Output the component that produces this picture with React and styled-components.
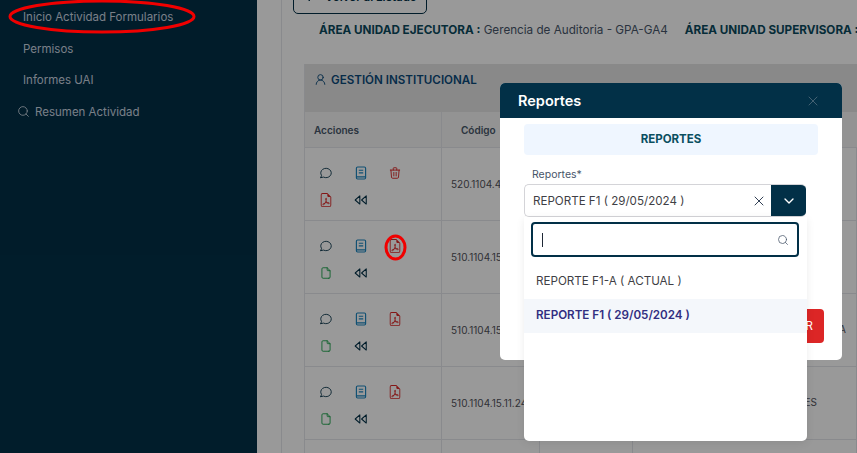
import React from "react";
import styled, { createGlobalStyle } from "styled-components";
import { Search, X, ChevronDown, UserRound } from "lucide-react";
import { BsFileEarmarkPdf } from "react-icons/bs";
import {
  TbMessageCircle,
  TbTrash,
  TbFile,
  TbPlayerTrackPrev,
  TbArrowLeft,
} from "react-icons/tb";

const GlobalStyle = createGlobalStyle`
  html, body { margin: 0; padding: 0; height: 100%; overflow: hidden; }
  body { font-family: Inter, "Liberation Sans", sans-serif; background: #fff; }
`;

const rows = [
  { code: "520.1104.4", icons: ["trash", "pdf"] },
  { code: "510.1104.15", icons: ["pdf", "file"] },
  { code: "510.1104.15", icons: ["pdf", "file"], tail: "A", tailRight: 10 },
  { code: "510.1104.15.11.24", icons: ["pdf", "file"], tail: "ES", tailRight: 39 },
];

function BookIcon() {
  return (
    <svg width="14" height="14" viewBox="0 0 14 14" fill="none" stroke="currentColor" strokeWidth="1.15">
      <rect x="2.4" y="1" width="9.2" height="12" rx="1.2" />
      <path d="M2.4 10.8h9.2M4.8 4.2h4.4M4.8 6.9h4.4" />
    </svg>
  );
}

function App() {
  return (
    <Page>
      <GlobalStyle />
      <Sidebar>
        <NavItem>Inicio Actividad Formularios</NavItem>
        <NavItem>Permisos</NavItem>
        <NavItem>Informes UAI</NavItem>
        <NavItem $icon>
          <Search size={13} strokeWidth={1.6} />
          Resumen Actividad
        </NavItem>
      </Sidebar>
      <Main>
        <BackButton>
          <TbArrowLeft size={14} />
          Volver al Listado
        </BackButton>
        <AreaLine>
          <span>
            <b>ÁREA UNIDAD EJECUTORA :</b> Gerencia de Auditoria - GPA-GA4
          </span>
          <span>
            <b>ÁREA UNIDAD SUPERVISORA :</b>
          </span>
        </AreaLine>
        <Card>
          <CardTitle>
            <UserRound size={13} strokeWidth={1.7} />
            GESTIÓN INSTITUCIONAL
          </CardTitle>
          <HeadRow>
            <HeadCell>Acciones</HeadCell>
            <HeadCell $center>Código</HeadCell>
          </HeadRow>
          {rows.map((row, i) => (
            <Row key={i}>
              <ActionCell>
                <IconGrid>
                  <Dark><TbMessageCircle size={14} strokeWidth={1.5} /></Dark>
                  <Blue><BookIcon /></Blue>
                  {row.icons[0] === "trash" ? (
                    <Red><TbTrash size={14} strokeWidth={1.6} /></Red>
                  ) : (
                    <Red><BsFileEarmarkPdf size={14} /></Red>
                  )}
                  {row.icons[1] === "pdf" ? (
                    <Red><BsFileEarmarkPdf size={14} /></Red>
                  ) : (
                    <Green><TbFile size={14} strokeWidth={1.6} /></Green>
                  )}
                  <Dark><TbPlayerTrackPrev size={14} strokeWidth={1.8} /></Dark>
                </IconGrid>
              </ActionCell>
              <CodeCell>{row.code}</CodeCell>
              <Cell />
              <Cell>
                {row.tail && <Tail $right={row.tailRight}>{row.tail}</Tail>}
              </Cell>
            </Row>
          ))}
          <Row>
            <Cell />
            <Cell />
            <Cell />
            <Cell />
          </Row>
        </Card>
      </Main>
      <Overlay />
      <Modal>
        <ModalHeader>
          Reportes
          <X size={16} strokeWidth={1.3} color="#4f6a7a" />
        </ModalHeader>
        <ModalBody>
          <Banner>REPORTES</Banner>
          <FieldLabel>Reportes*</FieldLabel>
          <SelectBox>
            <SelectValue>REPORTE F1 ( 29/05/2024 )</SelectValue>
            <ClearIcon><X size={16} strokeWidth={1.5} /></ClearIcon>
            <Arrow><ChevronDown size={16} strokeWidth={2} /></Arrow>
          </SelectBox>
          <FooterRow>
            <RedButton>GENERAR</RedButton>
          </FooterRow>
        </ModalBody>
      </Modal>
      <Dropdown>
        <SearchWrap>
          <SearchBox>
            <Caret />
            <Search size={12} strokeWidth={1.5} color="#475569" />
          </SearchBox>
        </SearchWrap>
        <Option>REPORTE F1-A ( ACTUAL )</Option>
        <Option $selected>REPORTE F1 ( 29/05/2024 )</Option>
      </Dropdown>
      <MarkNav viewBox="0 0 190 36" fill="none">
        <ellipse cx="95" cy="16.5" rx="92" ry="15.5" stroke="#f00000" strokeWidth="3" />
      </MarkNav>
      <MarkIcon viewBox="0 0 24 28" fill="none">
        <ellipse cx="11.5" cy="13.5" rx="9.5" ry="11.5" stroke="#f00000" strokeWidth="3" />
      </MarkIcon>
    </Page>
  );
}

export default App;

const Page = styled.div`
  display: flex;
  width: 857px;
  height: 453px;
  overflow: hidden;
  position: relative;
`;

const Sidebar = styled.nav`
  width: 257px;
  flex: none;
  background: #023047;
  padding-top: 1.4px;
  box-sizing: border-box;
`;

const NavItem = styled.div`
  display: flex;
  align-items: center;
  gap: 5px;
  height: 31.5px;
  padding-left: ${(p) => (p.$icon ? "17px" : "23px")};
  font-size: 11.5px;
  color: #cbd5e1;
`;

const Main = styled.main`
  flex: 1;
  min-width: 0;
  margin-left: 24px;
  border-left: 1px solid #e5e7eb;
  padding-left: 11px;
  overflow: hidden;
`;

const BackButton = styled.div`
  display: flex;
  align-items: center;
  gap: 8px;
  width: 134px;
  height: 34px;
  margin-top: -20px;
  padding-left: 9px;
  box-sizing: border-box;
  border: 1px solid #023047;
  border-radius: 5px;
  font-size: 11.5px;
  font-weight: 600;
  color: #023047;
`;

const AreaLine = styled.div`
  display: flex;
  gap: 17px;
  margin: 8px 0 0 26px;
  font-size: 11.7px;
  line-height: 16px;
  white-space: nowrap;
  color: #475569;

  b {
    font-weight: 700;
    color: #0b4a5e;
  }
`;

const Card = styled.section`
  margin: 26px 0 0 11px;
  border-left: 1px solid #e5e7eb;
`;

const CardTitle = styled.div`
  display: flex;
  align-items: flex-start;
  gap: 4px;
  height: 48px;
  padding: 9px 0 0 9px;
  box-sizing: border-box;
  background: #e5e5e5;
  font-size: 11.6px;
  font-weight: 600;
  line-height: 14px;
  color: #0b4a7a;
`;

const columns = "137px 98px 93px 1fr";

const HeadRow = styled.div`
  display: grid;
  grid-template-columns: ${columns};
  height: 36px;
  background: #f5f5f5;
  border-bottom: 1px solid #e5e7eb;
  box-sizing: border-box;
`;

const HeadCell = styled.div`
  display: flex;
  align-items: center;
  padding-left: ${(p) => (p.$center ? "19px" : "9px")};
  border-right: ${(p) => (p.$center ? "none" : "1px solid #e5e7eb")};
  font-size: 10px;
  font-weight: 600;
  color: #475569;
`;

const Row = styled.div`
  display: grid;
  grid-template-columns: ${columns};
  height: 73px;
  box-sizing: border-box;
  border-bottom: 1px solid #e5e7eb;
`;

const Cell = styled.div`
  position: relative;
  border-right: 1px solid #e5e7eb;
`;

const ActionCell = styled(Cell)`
  padding: 18px 0 0 14px;
`;

const IconGrid = styled.div`
  display: grid;
  grid-template-columns: 35px 34px 35px;
  grid-auto-rows: 27px;
  font-size: 0;
`;

const Dark = styled.span`color: #023047;`;
const Blue = styled.span`color: #1a86c0;`;
const Red = styled.span`color: #dc2626;`;
const Green = styled.span`color: #22a650;`;

const CodeCell = styled(Cell)`
  display: flex;
  align-items: center;
  padding-left: 9px;
  font-size: 10px;
  color: #52525b;
  white-space: nowrap;
`;

const Tail = styled.span`
  position: absolute;
  top: 29px;
  right: ${(p) => p.$right}px;
  font-size: 10px;
  color: #52525b;
`;

const Overlay = styled.div`
  position: absolute;
  inset: 0;
  background: rgba(0, 0, 0, 0.4);
`;

const Modal = styled.div`
  position: absolute;
  left: 500px;
  top: 83px;
  width: 342px;
  height: 277px;
  background: #fff;
  border-radius: 5px;
  overflow: hidden;
`;

const ModalHeader = styled.header`
  display: flex;
  align-items: center;
  justify-content: space-between;
  height: 35px;
  padding: 0 21px 0 18px;
  background: #023047;
  color: #fff;
  font-size: 14.5px;
  font-weight: 600;
`;

const ModalBody = styled.div`
  padding: 6px 24px 0;
`;

const Banner = styled.div`
  display: flex;
  align-items: center;
  justify-content: center;
  height: 31px;
  padding-bottom: 1px;
  box-sizing: border-box;
  border-radius: 4px;
  background: #eff6ff;
  font-size: 11.5px;
  font-weight: 700;
  color: #0b4f5f;
`;

const FieldLabel = styled.div`
  margin: 13px 0 0 8px;
  font-size: 10.5px;
  line-height: 14px;
  color: #475569;
`;

const SelectBox = styled.div`
  display: flex;
  align-items: center;
  width: 282px;
  height: 33px;
  margin-top: 2px;
  box-sizing: border-box;
  border: 1px solid #d4d4d8;
  border-right: none;
  border-radius: 5px;
  overflow: hidden;
`;

const SelectValue = styled.div`
  flex: 1;
  padding-left: 8px;
  font-size: 11.6px;
  color: #3f3f46;
`;

const ClearIcon = styled.span`
  display: flex;
  margin-right: 4px;
  color: #334155;
`;

const Arrow = styled.span`
  display: flex;
  align-items: center;
  justify-content: center;
  width: 35px;
  height: 33px;
  background: #023047;
  color: #fff;
`;

const FooterRow = styled.div`
  display: flex;
  justify-content: flex-end;
  margin: 92px -6px 0 0;
`;

const RedButton = styled.div`
  display: flex;
  align-items: center;
  justify-content: center;
  width: 70px;
  height: 34px;
  padding-right: 6px;
  box-sizing: border-box;
  border-radius: 4px;
  background: #dc2626;
  color: #fff;
  font-size: 11.5px;
`;

const Dropdown = styled.div`
  position: absolute;
  left: 524px;
  top: 217px;
  width: 283px;
  height: 224px;
  background: #fff;
  border-radius: 0 0 5px 5px;
  box-shadow: 0 2px 8px rgba(0, 0, 0, 0.08);
`;

const SearchWrap = styled.div`
  padding: 5px 8px 0 7px;
  height: 48px;
  box-sizing: border-box;
`;

const SearchBox = styled.div`
  display: flex;
  align-items: center;
  justify-content: space-between;
  height: 35px;
  padding: 0 8px 0 9px;
  box-sizing: border-box;
  border: 2px solid #023047;
  border-radius: 4px;
`;

const Caret = styled.span`
  width: 1px;
  height: 14px;
  background: #1f2937;
`;

const Option = styled.div`
  display: flex;
  align-items: center;
  height: 34px;
  padding: 0 0 2px 12px;
  box-sizing: border-box;
  font-size: 11.65px;
  font-weight: ${(p) => (p.$selected ? 600 : 400)};
  color: ${(p) => (p.$selected ? "#312e81" : "#3f3f46")};
  background: ${(p) => (p.$selected ? "#f4f7fb" : "transparent")};
`;

const MarkNav = styled.svg`
  position: absolute;
  left: 7px;
  top: 0;
  width: 190px;
  height: 36px;
`;

const MarkIcon = styled.svg`
  position: absolute;
  left: 384px;
  top: 234px;
  width: 24px;
  height: 28px;
`;
